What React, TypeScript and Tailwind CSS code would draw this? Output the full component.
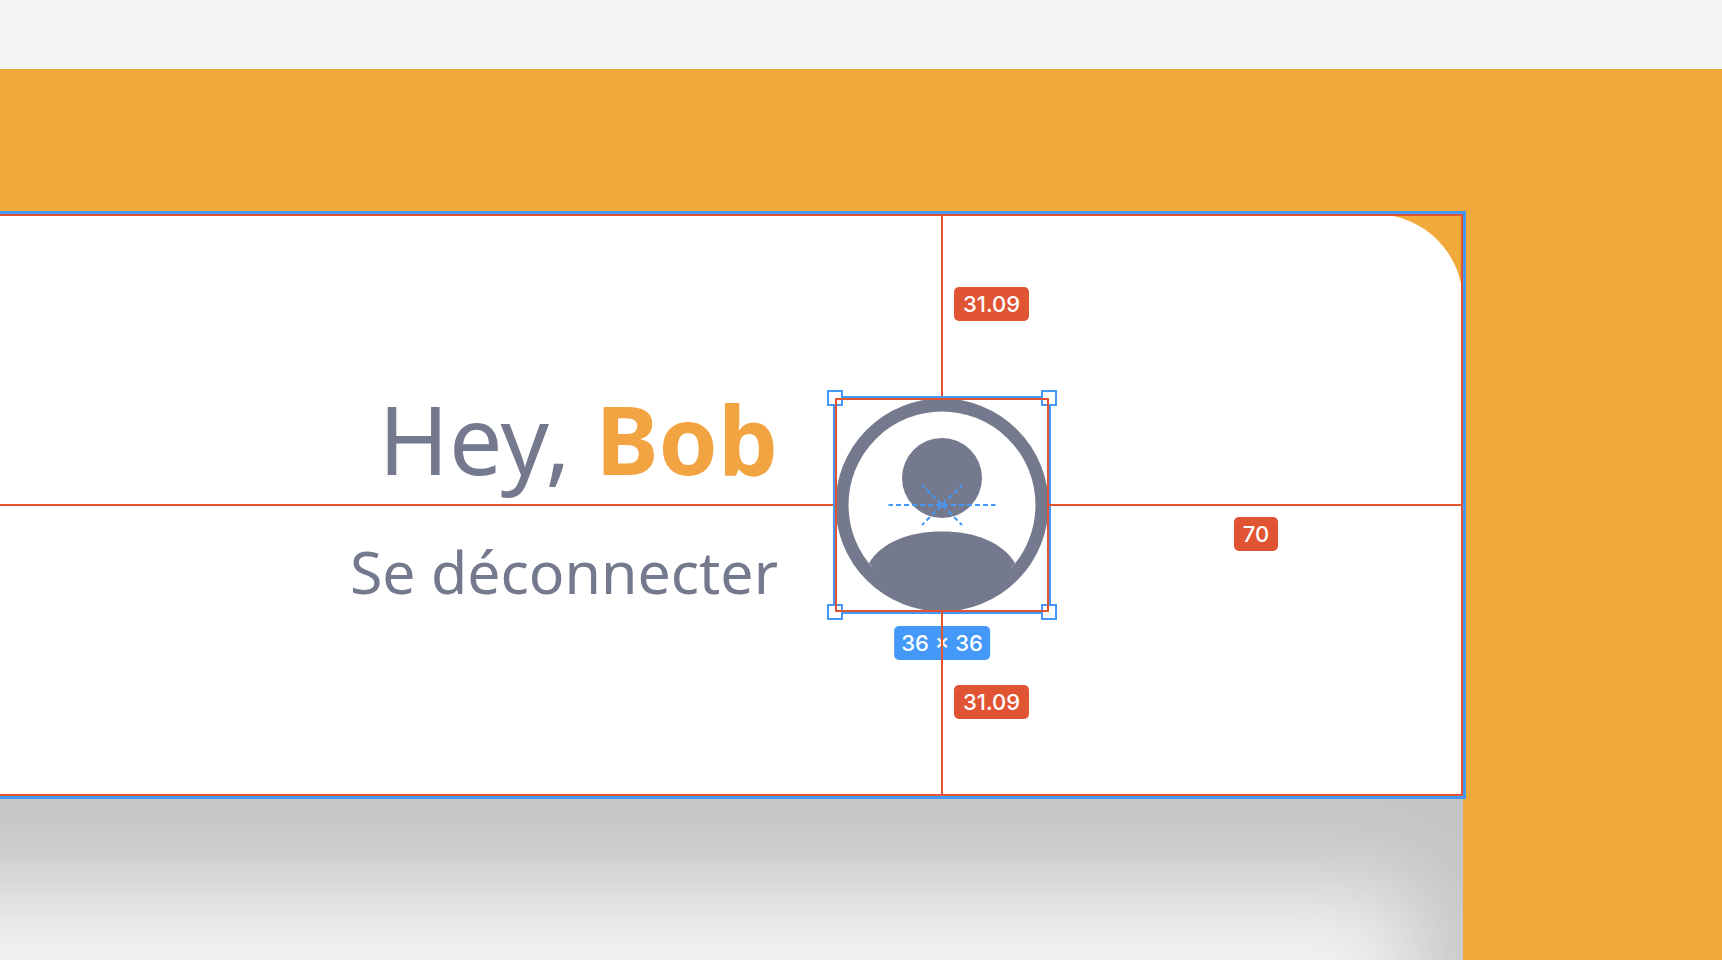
import type { ReactNode } from "react";

function Label({ children, className = "" }: { children: ReactNode; className?: string }) {
  return (
    <span
      className={`flex h-[34px] items-center justify-center rounded-[5px] text-[22px] leading-[34px] font-medium whitespace-nowrap text-white ${className}`}
    >
      {children}
    </span>
  );
}

function Handle({ className }: { className: string }) {
  return <span className={`absolute size-4 border-2 border-[#4499f8] bg-white ${className}`} />;
}

function Avatar() {
  return (
    <svg viewBox="0 0 214 214" className="block size-full" role="img" aria-label="Avatar">
      <circle cx="107" cy="107" r="100" fill="#fff" stroke="#74798d" strokeWidth="13" />
      <circle cx="107" cy="80" r="40" fill="#74798d" />
      <path
        d="M34 165C47 144 74 133.500 107 133.500S167 144 180 165L154 198Q107 220 60 198Z"
        fill="#74798d"
      />
      <g stroke="#4499f8" strokeWidth="2" strokeDasharray="5 3" strokeDashoffset="-1" fill="none">
        <path d="M107 107H53.500M107 107H160.500" />
        <path d="M107 107L87 87M107 107L127 87M107 107L87 127M107 107L127 127" />
      </g>
    </svg>
  );
}

export default function App() {
  return (
    <div className="flex h-screen flex-col overflow-hidden bg-[#f2a93b] font-['Noto_Sans',sans-serif]">
      <div className="h-[69px] shrink-0 bg-[#f4f4f4]" />
      <div className="flex flex-1 flex-col pt-[145px] pr-[259px]">
        <header className="relative z-10 flex h-[582px] shrink-0 items-center justify-end rounded-tr-[88px] bg-white">
          <span className="absolute -top-[3px] -right-[3px] -bottom-[3px] left-0 border-y-[3px] border-r-[3px] border-[#4499f8]" />
          <span className="absolute inset-0 border-y-2 border-r-2 border-[#e05433]" />
          <span className="absolute top-1/2 right-[628px] left-0 h-[2px] -translate-y-1/2 bg-[#e05433]" />

          <div className="mr-[57px] flex flex-col items-end text-[#74798d]">
            <p className="text-[95px] leading-[132px]">
              Hey, <strong className="font-bold text-[#f2a342]">Bob</strong>
            </p>
            <a href="#logout" className="text-[59px] leading-[134px]">
              Se déconnecter
            </a>
          </div>

          <div className="relative flex h-full w-[214px] flex-col items-center font-['Inter',sans-serif]">
            <div className="relative flex w-[2px] flex-1 items-center bg-[#e05433] pb-1">
              <Label className="ml-[13px] bg-[#e05433] px-[9px]">31.09</Label>
            </div>
            <div className="relative size-[214px] shrink-0">
              <Avatar />
              <span className="absolute -inset-[2px] border-2 border-[#4499f8]" />
              <Handle className="-top-2 -left-2" />
              <Handle className="-top-2 -right-2" />
              <Handle className="-bottom-2 -left-2" />
              <Handle className="-right-2 -bottom-2" />
              <span className="absolute inset-0 border-2 border-[#e05433]" />
            </div>
            <div className="relative flex w-[2px] flex-1 items-center pb-1">
              <Label className="absolute top-[14px] left-1/2 -translate-x-1/2 bg-[#4499f8] px-[7px]">36 × 36</Label>
              <span className="absolute inset-0 bg-[#e05433]" />
              <Label className="relative ml-[13px] bg-[#e05433] px-[9px]">31.09</Label>
            </div>
          </div>

          <div className="relative h-[2px] w-[414px] bg-[#e05433] font-['Inter',sans-serif]">
            <Label className="absolute top-[13px] left-1/2 w-[44px] -translate-x-1/2 bg-[#e05433]">70</Label>
          </div>
        </header>
        <main className="-ml-[300px] h-[600px] shrink-0 bg-[#f4f4f6] shadow-[inset_-44px_92px_100px_#c4c4c6]" />
      </div>
    </div>
  );
}
